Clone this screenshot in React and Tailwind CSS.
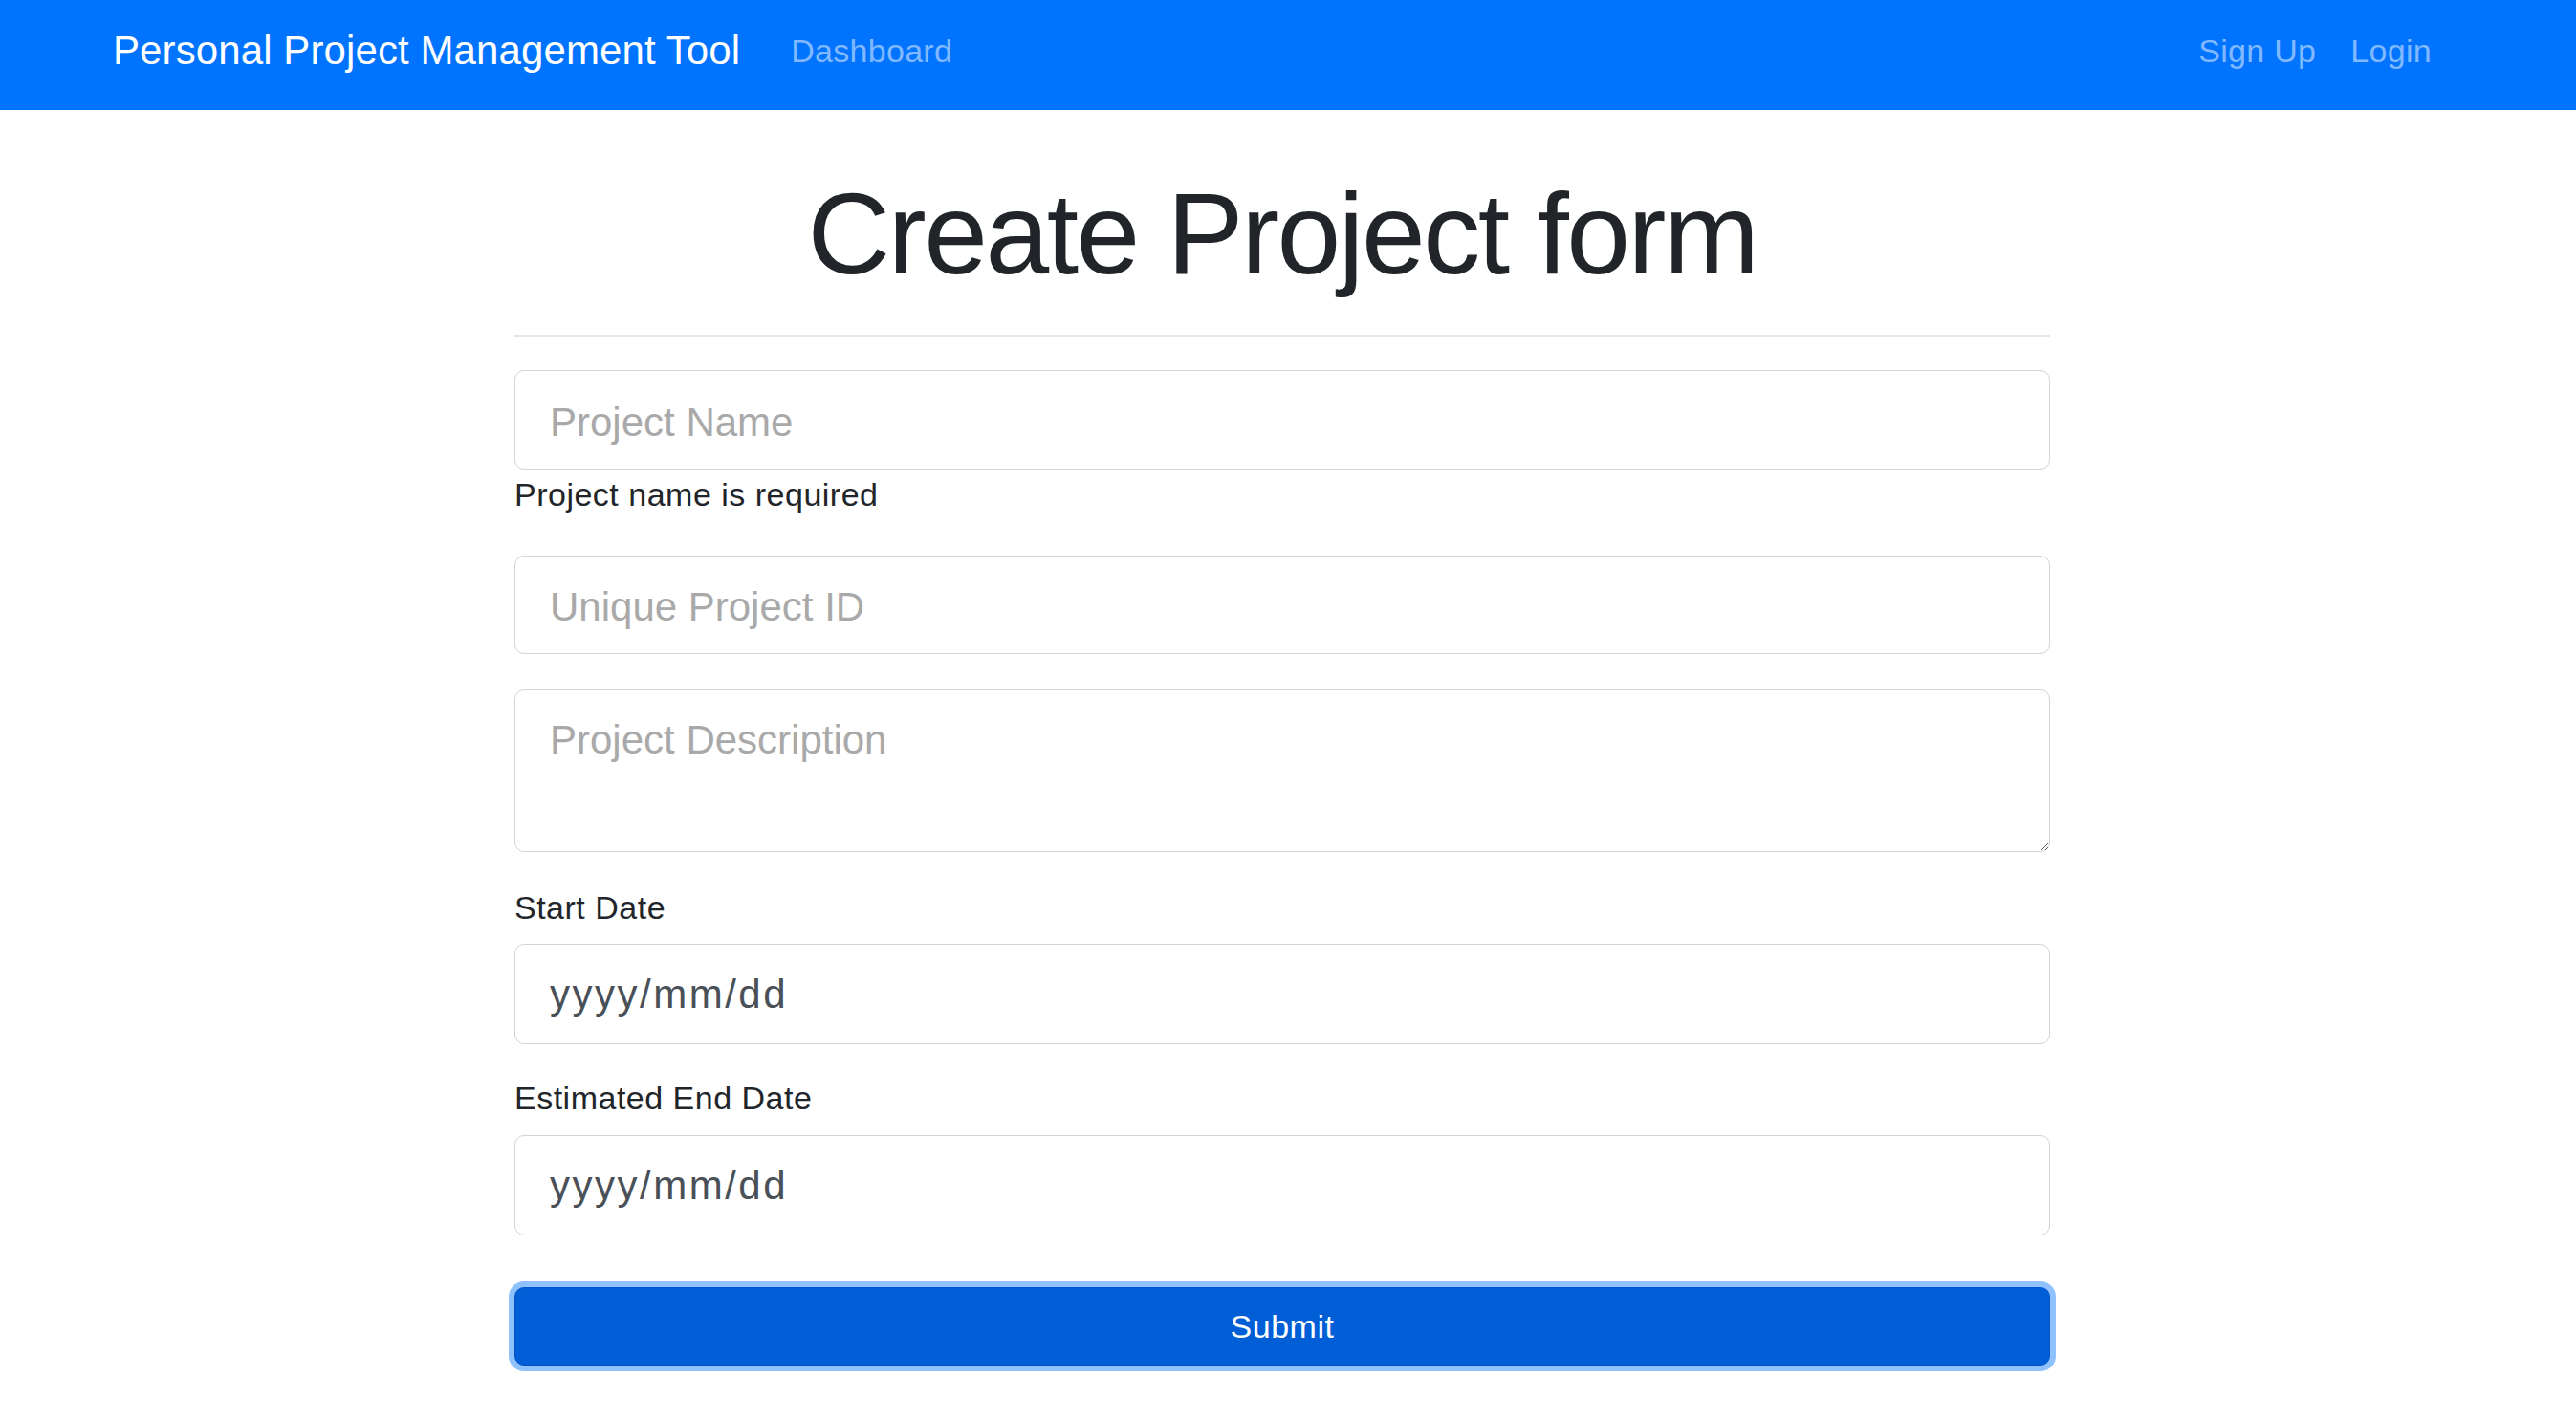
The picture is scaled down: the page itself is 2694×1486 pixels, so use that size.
// App.jsx - Create Project form page
const fontStack = { fontFamily: '"Liberation Sans", Arial, Helvetica, sans-serif' };

const inputBase =
  'block w-full border border-[#ced4da] rounded-[10px] bg-white px-[36px] text-[42px] text-[#495057] placeholder:text-[#a9a9a9] outline-none';

const Navbar = () => (
  <nav className="h-[115px] bg-[#0073ff] flex items-center pl-[118px] pr-[151px] pb-[10px]">
    <a href="#" className="text-[42px] leading-none tracking-[0.1px] text-white whitespace-nowrap">
      Personal Project Management Tool
    </a>
    <a href="#" className="ml-[53px] text-[34px] leading-none tracking-[0.3px] text-[#80b9ff]">
      Dashboard
    </a>
    <div className="ml-auto flex items-center gap-[36px]">
      <a href="#" className="text-[34px] leading-none tracking-[0.3px] text-[#80b9ff]">Sign Up</a>
      <a href="#" className="text-[34px] leading-none tracking-[0.3px] text-[#80b9ff]">Login</a>
    </div>
  </nav>
);

const App = () => {
  return (
    <div className="min-h-screen bg-white" style={fontStack}>
      <Navbar />

      <main className="flex justify-center pr-[12px]">
        <div className="w-[1606px]">
          <h1 className="mt-[69px] text-center text-[120px] leading-[120px] tracking-[-2.5px] text-[#212529]">
            Create Project form
          </h1>
          <hr className="mt-[46px] border-0 border-t-2 border-[#e6e6e6]" />

          {/* Project name */}
          <input type="text" placeholder="Project Name" className={`${inputBase} mt-[35px] h-[104px] pt-[5px]`} />
          <p className="mt-[1px] text-[34px] leading-[50px] tracking-[0.5px] text-[#212529]">
            Project name is required
          </p>

          {/* Identifier */}
          <input type="text" placeholder="Unique Project ID" className={`${inputBase} mt-[39px] h-[103px] pt-[5px]`} />

          {/* Description */}
          <textarea
            placeholder="Project Description"
            className={`${inputBase} mt-[37px] h-[170px] pt-[20px] pb-[16px] leading-[63px]`}
          />

          {/* Dates */}
          <label className="block mt-[33px] text-[34px] leading-[50px] tracking-[0.5px] text-[#212529]">
            Start Date
          </label>
          <input
            type="text"
            readOnly
            defaultValue="yyyy/mm/dd"
            className={`${inputBase} mt-[13px] h-[105px] tracking-[2.5px]`}
          />

          <label className="block mt-[31px] text-[34px] leading-[50px] tracking-[0.5px] text-[#212529]">
            Estimated End Date
          </label>
          <input
            type="text"
            readOnly
            defaultValue="yyyy/mm/dd"
            className={`${inputBase} mt-[14px] h-[105px] tracking-[2.5px]`}
          />

          <button
            type="submit"
            className="mt-[54px] mb-[60px] block w-full h-[82px] rounded-[10px] border border-[#0055c6] bg-[#005fd6] text-white text-[34px] tracking-[0.5px] shadow-[0_0_0_6px_#8fc1ff]"
          >
            Submit
          </button>
        </div>
      </main>
    </div>
  );
};

export default App;
